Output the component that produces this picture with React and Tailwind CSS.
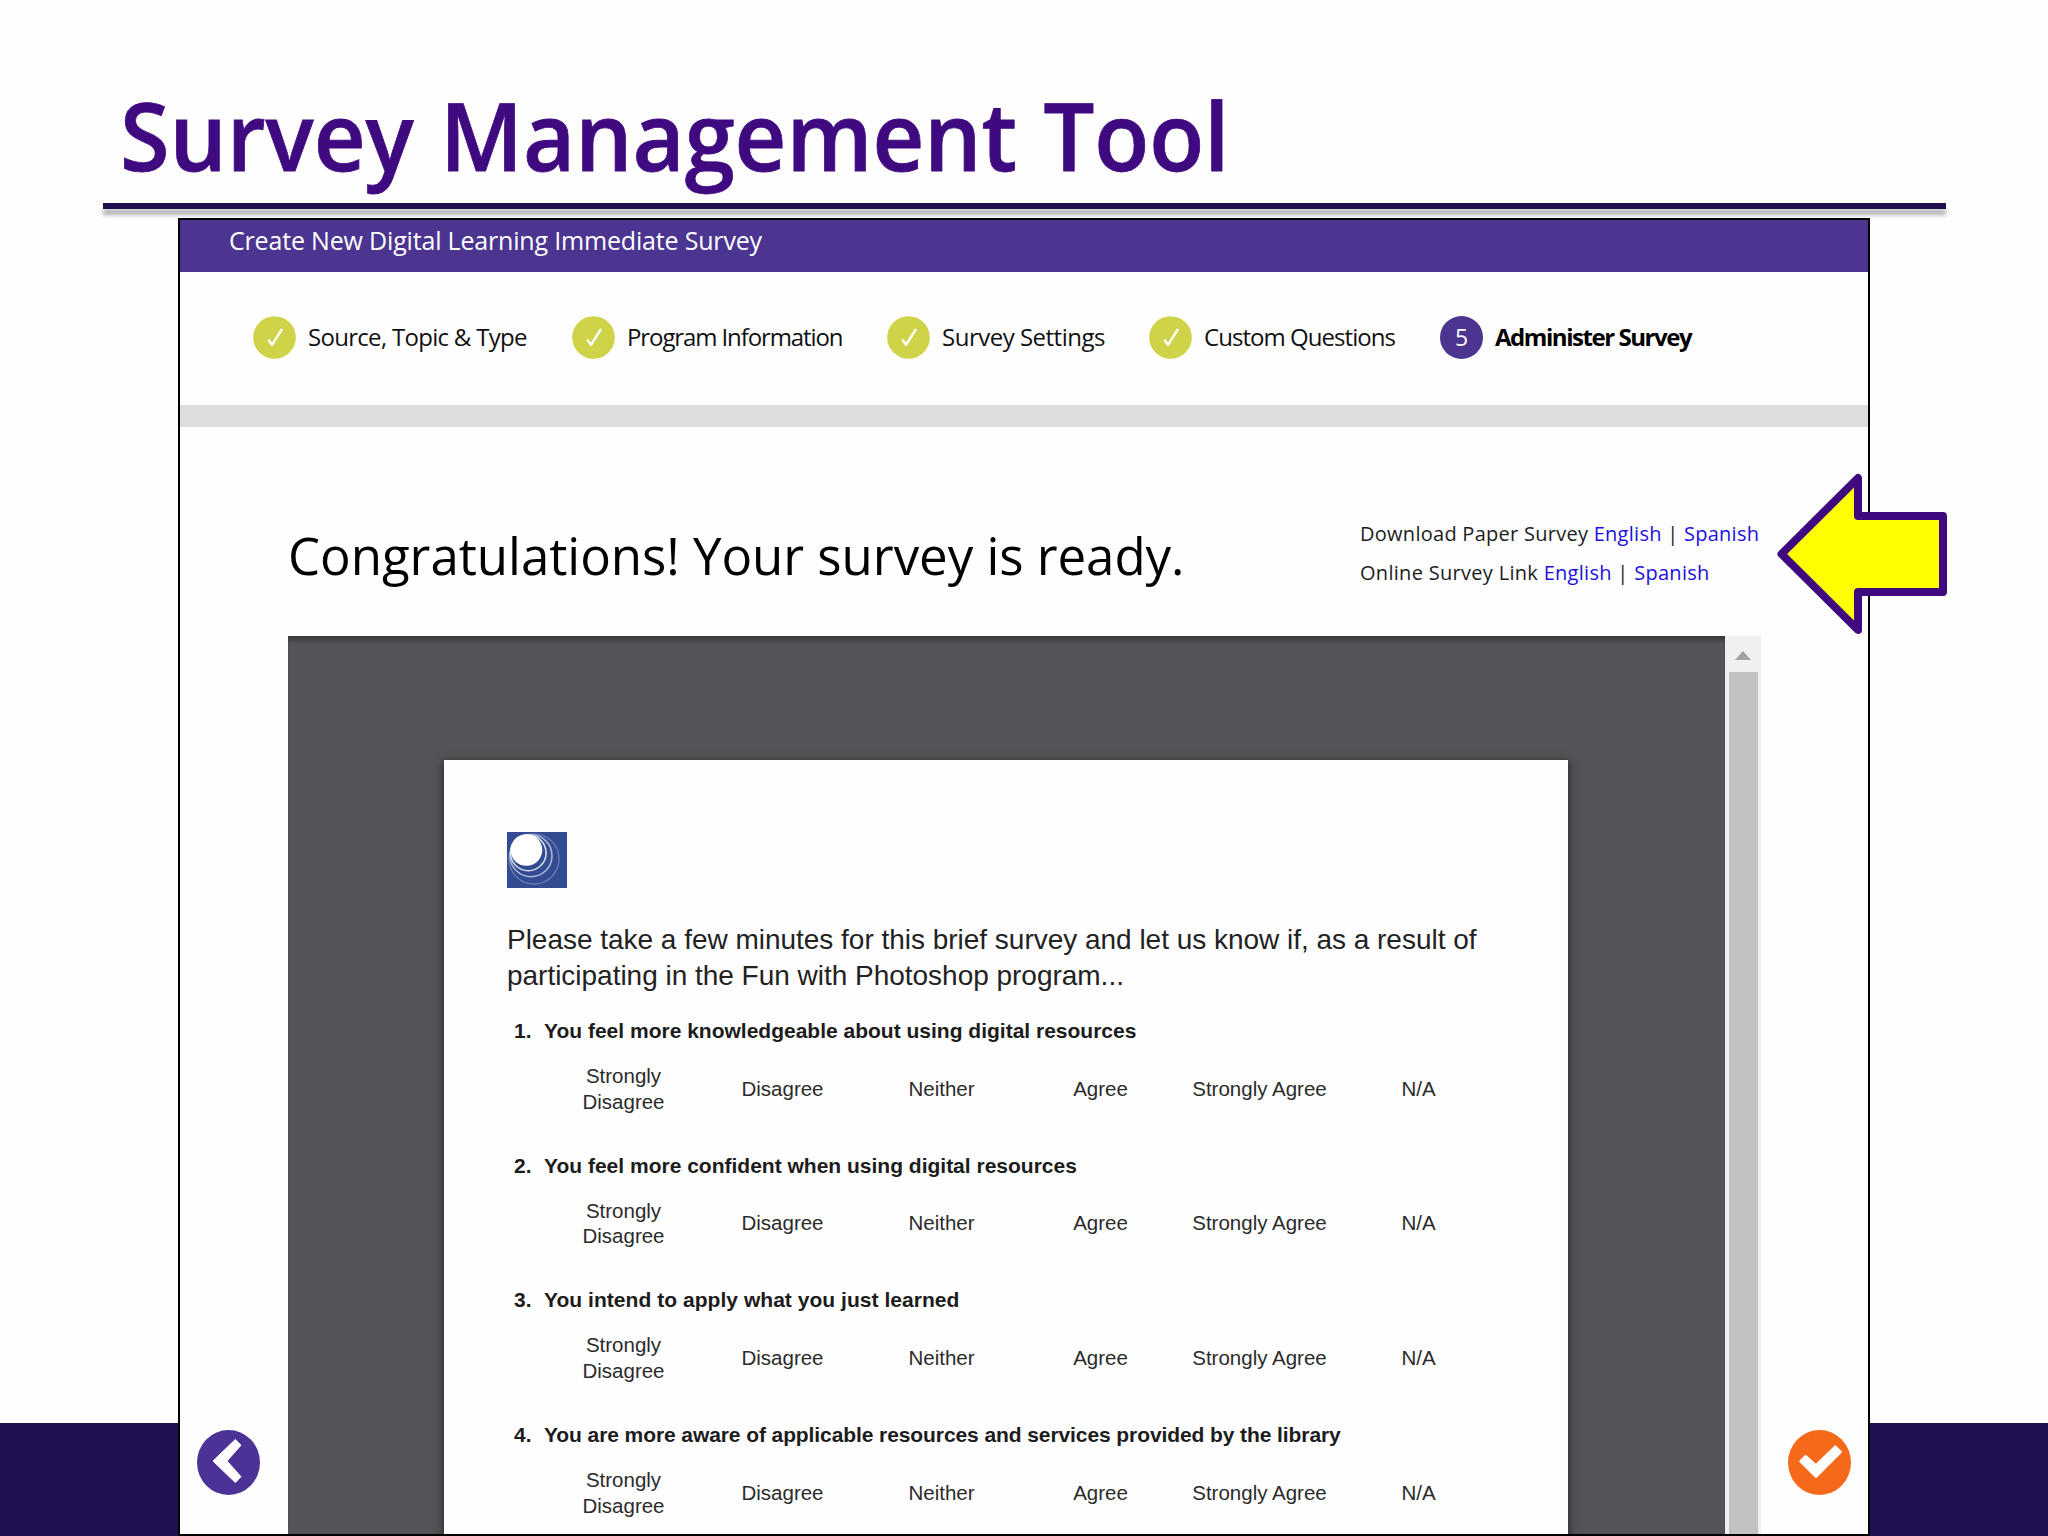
const steps = [
  { label: "Source, Topic & Type", box: "w-[319px]", text: "tracking-[-0.7px]" },
  { label: "Program Information", box: "w-[315px]", text: "tracking-[-1.1px]" },
  { label: "Survey Settings", box: "w-[262px]", text: "tracking-[-0.5px]" },
  { label: "Custom Questions", box: "w-[291px]", text: "tracking-[-0.95px]" },
];

const questions = [
  { text: "You feel more knowledgeable about using digital resources", tracking: "tracking-normal" },
  { text: "You feel more confident when using digital resources", tracking: "tracking-normal" },
  { text: "You intend to apply what you just learned", tracking: "tracking-[0.04px]" },
  { text: "You are more aware of applicable resources and services provided by the library", tracking: "tracking-[-0.09px]" },
];

const answers = ["Strongly Disagree", "Disagree", "Neither", "Agree", "Strongly Agree", "N/A"];

const Steps = () => (
  <div className="flex items-center h-[133px] pl-[73px] pb-[2px] text-2xl text-[#111] whitespace-nowrap">
    {steps.map((step) => (
      <div key={step.label} className={`flex items-center gap-3 shrink-0 ${step.box}`}>
        <svg width="43" height="43" viewBox="0 0 43 43" fill="none" className="shrink-0">
          <circle cx="21.5" cy="21.5" r="21.3" fill="#ced348" />
          <path d="M15.3 23.5 19 28.8 29 13" stroke="#fff" strokeWidth="2.4" strokeLinejoin="round" />
        </svg>
        <span className={`-mt-[2px] ${step.text}`}>{step.label}</span>
      </div>
    ))}
    <div className="flex items-center gap-3">
      <div className="flex items-center justify-center w-[43px] h-[43px] rounded-full bg-[#4b3590] text-white text-[23px]">
        5
      </div>
      <span className="-mt-[2px] font-bold text-black tracking-[-1.45px]">Administer Survey</span>
    </div>
  </div>
);

const Languages = () => (
  <>
    <a className="text-[#1a10e0]">English</a> | <a className="text-[#1a10e0]">Spanish</a>
  </>
);

const Logo = () => (
  <svg width="60" height="56" viewBox="0 0 60 56" fill="none">
    <rect width="60" height="56" fill="#334b90" />
    <circle cx="27" cy="27" r="25" stroke="#6478b4" strokeWidth="1.5" />
    <circle cx="24" cy="23.7" r="21" stroke="#a9b5da" strokeWidth="1.6" />
    <circle cx="21.3" cy="20.9" r="17.8" stroke="#d3daee" strokeWidth="1.6" />
    <circle cx="19.4" cy="18" r="15.8" fill="#fff" />
  </svg>
);

const Question = ({ number, text, tracking }) => (
  <div className="h-[134.7px] shrink-0">
    <div className="flex pl-[7px] text-[21px] leading-6 font-bold text-[#1c1c1c] whitespace-nowrap">
      <span className="w-[30px]">{number}.</span>
      <span className={tracking}>{text}</span>
    </div>
    <div className="grid grid-cols-6 items-center w-[954px] h-[51px] ml-[37px] mt-5 text-[20.5px] leading-[25.5px] text-center text-[#2b2b2b]">
      {answers.map((answer) => (
        <div key={answer} className="px-[10px]">{answer}</div>
      ))}
    </div>
  </div>
);

const Viewer = () => (
  <div className="flex w-[1473px] h-[898px] shrink-0 overflow-hidden">
    <div className="w-[1437px] pl-[156px] pt-[124px] bg-[#535457] shadow-[inset_0_7px_5px_-3px_rgba(0,0,0,0.35)]">
      <div className="flex flex-col w-[1124px] h-[900px] pt-[72px] pl-[63px] bg-[#fefefe] shadow-[0_2px_8px_1px_rgba(0,0,0,0.5)] font-['Liberation_Sans',sans-serif]">
        <Logo />
        <p className="mt-[34px] mb-[25px] text-[28px] leading-9 tracking-[-0.02px] text-[#222] whitespace-nowrap">
          Please take a few minutes for this brief survey and let us know if, as a result of
          <br />
          participating in the Fun with Photoshop program...
        </p>
        {questions.map((question, i) => (
          <Question key={question.text} number={i + 1} {...question} />
        ))}
      </div>
    </div>
    <div className="flex flex-col items-center w-9 bg-[#f1eff2]">
      <div className="flex items-center justify-center h-9 pt-[3px]">
        <svg width="16" height="9" viewBox="0 0 16 9">
          <path d="M8 0 16 9H0Z" fill="#a3a1a4" />
        </svg>
      </div>
      <div className="w-[29px] grow bg-[#c2c0c3]" />
    </div>
  </div>
);

const Arrow = () => (
  <svg width="180" height="170" viewBox="0 0 180 170" className="absolute left-[1773px] top-[469px]">
    <path
      d="M8.5 85 85 9V47H170V123H85V161Z"
      fill="#ffff00"
      stroke="#3f0a80"
      strokeWidth="8"
      strokeLinejoin="round"
    />
  </svg>
);

export default function App() {
  return (
    <div className="relative flex flex-col w-[2048px] h-[1536px] overflow-hidden bg-[#fefefe] font-['Open_Sans',sans-serif]">
      <h1 className="h-[203px] shrink-0 pt-[84px] pl-[120px] text-[95px] leading-[100px] font-semibold text-[#3f0a80] whitespace-nowrap">
        <span className="inline-block origin-left scale-x-[0.948] [-webkit-text-stroke:0.8px_#3f0a80] [word-spacing:3px]">
          Survey Management Tool
        </span>
      </h1>
      <div className="w-[1843px] h-[6px] shrink-0 ml-[103px] bg-[#211150] shadow-[0_6px_4px_rgba(0,0,0,0.3)]" />

      <div className="flex grow mt-[9px]">
        <div className="flex items-end w-[178px]">
          <div className="w-full h-[113px] bg-[#211150]" />
        </div>

        <div className="w-[1692px] h-[1318px] border-2 border-black bg-[#fefefe]">
          <div className="h-[52px] pl-[49px] bg-[#4b3590] text-[25px] leading-10 tracking-[-0.18px] text-white">
            Create New Digital Learning Immediate Survey
          </div>
          <Steps />
          <div className="h-[22px] bg-[#dedcdf]" />

          <div className="flex justify-between h-[209px] pl-[108px] pr-[107px] whitespace-nowrap">
            <h2 className="pt-[88px] text-[51px] leading-[80px] tracking-[-0.04px] text-black">
              Congratulations! Your survey is ready.
            </h2>
            <div className="w-[401px] pt-[87px] text-xl leading-[39px] text-[#1c1c1c]">
              <div className="tracking-[0.27px]">Download Paper Survey <Languages /></div>
              <div className="tracking-[0.3px]">Online Survey Link <Languages /></div>
            </div>
          </div>

          <div className="flex">
            <div className="flex items-end w-[108px] pl-[17px] pb-[39px]">
              <svg width="63" height="65" viewBox="0 0 63 65">
                <ellipse cx="31.5" cy="32.5" rx="31.5" ry="32.5" fill="#4b3296" />
                <path d="M16 31 38.3 9.5 44 15.2 30 31 44 46.7 38.3 52.5Z" fill="#fff" stroke="#fff" strokeLinejoin="round" />
              </svg>
            </div>
            <Viewer />
            <div className="flex items-end w-[107px] pl-[27px] pb-[39px]">
              <svg width="63" height="65" viewBox="0 0 63 65">
                <ellipse cx="31.5" cy="32.5" rx="31.5" ry="32.5" fill="#f46a1a" />
                <path
                  d="M12.5 31.3 17.6 26.2 28 35.5 47.3 16.7 52.5 22 28 46.7Z"
                  fill="#fff"
                  stroke="#fff"
                  strokeWidth="2.5"
                  strokeLinejoin="round"
                />
              </svg>
            </div>
          </div>
        </div>

        <div className="flex items-end w-[178px]">
          <div className="w-full h-[113px] bg-[#211150]" />
        </div>
      </div>

      <Arrow />
    </div>
  );
}
